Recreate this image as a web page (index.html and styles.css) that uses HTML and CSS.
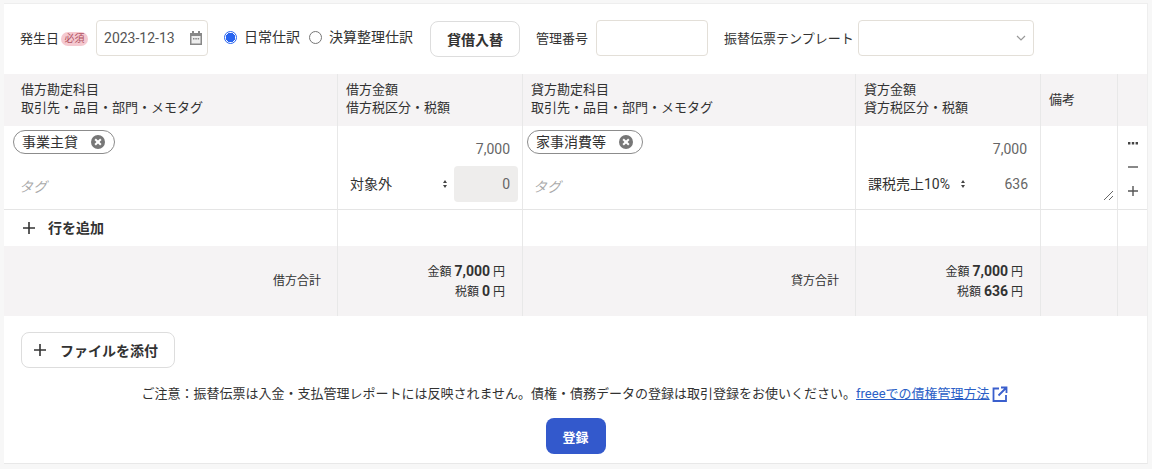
FILE: index.html
```html
<!DOCTYPE html>
<html lang="ja">

<head>
    <title>振替伝票</title>
    <link rel="stylesheet" href="styles.css">
</head>

<body>
    <div class="card">
        <!-- Toolbar -->
        <div class="toolbar">
            <span class="label">発生日</span>
            <span class="required">必須</span>
            <div class="field date-field">
                <span>2023-12-13</span>
                <svg class="calendar" width="12" height="14" viewBox="0 0 12 14">
                    <path fill="#888" d="M2 0h2v2h4V0h2v2h2v12H0V2h2z" />
                    <rect x="1.5" y="5" width="9" height="7.5" fill="#eee" />
                    <rect x="3" y="7" width="1.5" height="1.5" fill="#888" />
                    <rect x="5.3" y="7" width="1.5" height="1.5" fill="#888" />
                    <rect x="7.6" y="7" width="1.5" height="1.5" fill="#888" />
                </svg>
            </div>
            <span class="radio checked"></span>
            <span class="radio-label">日常仕訳</span>
            <span class="radio"></span>
            <span class="radio-label">決算整理仕訳</span>
            <button class="button swap">貸借入替</button>
            <span class="label number-label">管理番号</span>
            <div class="field number-field"></div>
            <span class="label template-label">振替伝票テンプレート</span>
            <div class="field template-field">
                <svg width="10" height="6" viewBox="0 0 10 6">
                    <path d="M1 1l4 4 4-4" fill="none" stroke="#999" stroke-width="1.2" />
                </svg>
            </div>
        </div>

        <!-- Journal table -->
        <div class="journal">
            <div class="cell head">借方勘定科目<br>取引先・品目・部門・メモタグ</div>
            <div class="cell head">借方金額<br>借方税区分・税額</div>
            <div class="cell head">貸方勘定科目<br>取引先・品目・部門・メモタグ</div>
            <div class="cell head">貸方金額<br>貸方税区分・税額</div>
            <div class="cell head">備考</div>
            <div class="cell head"></div>

            <div class="cell body account">
                <span class="chip">事業主貸<i class="chip-x"></i></span>
                <span class="tag">タグ</span>
            </div>
            <div class="cell body amount">
                <div class="amount-value">7,000</div>
                <div class="tax-row">
                    <span class="tax-name debit-tax">対象外</span>
                    <svg class="updown" width="6" height="10" viewBox="0 0 6 10">
                        <path fill="#444" d="M3 1l2 3H1zM3 9L1 6h4z" />
                    </svg>
                    <span class="tax-value disabled">0</span>
                </div>
            </div>
            <div class="cell body account">
                <span class="chip">家事消費等<i class="chip-x"></i></span>
                <span class="tag">タグ</span>
            </div>
            <div class="cell body amount">
                <div class="amount-value credit-value">7,000</div>
                <div class="tax-row">
                    <span class="tax-name credit-tax">課税売上10%</span>
                    <svg class="updown" width="6" height="10" viewBox="0 0 6 10">
                        <path fill="#444" d="M3 1l2 3H1zM3 9L1 6h4z" />
                    </svg>
                    <span class="tax-value">636</span>
                </div>
            </div>
            <div class="cell body memo">
                <svg class="resize" width="9" height="9" viewBox="0 0 9 9">
                    <path d="M0 9l9-9M5 9l4-4" stroke="#666" fill="none" />
                </svg>
            </div>
            <div class="cell body actions">
                <svg width="12" height="12" viewBox="0 0 12 12">
                    <path fill="#444" d="M1 5h2.4v2.4H1zM4.8 5h2.4v2.4H4.8zM8.6 5H11v2.4H8.6z" />
                </svg>
                <svg width="12" height="12" viewBox="0 0 12 12">
                    <path fill="#555" d="M1 5.300h10v1.400H1z" />
                </svg>
                <svg width="12" height="12" viewBox="0 0 12 12">
                    <path fill="#555" d="M1 5.300h4.300V1h1.400v4.300H11v1.400H6.700V11H5.300V6.700H1z" />
                </svg>
            </div>

            <div class="cell add-row">
                <svg width="14" height="14" viewBox="0 0 14 14">
                    <path fill="#333" d="M1 6.200h5.200V1h1.600v5.200H13v1.600H7.800V13H6.200V7.800H1z" />
                </svg>
                <span>行を追加</span>
            </div>
            <div class="cell add-row"></div>
            <div class="cell add-row"></div>
            <div class="cell add-row"></div>
            <div class="cell add-row"></div>
            <div class="cell add-row"></div>

            <div class="cell total total-label">借方合計</div>
            <div class="cell total total-sum">
                <div>金額 <b>7,000</b> 円</div>
                <div>税額 <b>0</b> 円</div>
            </div>
            <div class="cell total total-label">貸方合計</div>
            <div class="cell total total-sum">
                <div>金額 <b>7,000</b> 円</div>
                <div>税額 <b>636</b> 円</div>
            </div>
            <div class="cell total"></div>
            <div class="cell total"></div>
        </div>

        <!-- Footer -->
        <div class="footer">
            <button class="button attach">
                <svg width="14" height="14" viewBox="0 0 14 14">
                    <path fill="#333" d="M1 6.200h5.200V1h1.600v5.200H13v1.600H7.800V13H6.200V7.800H1z" />
                </svg>
                ファイルを添付
            </button>
            <p class="notice">ご注意：振替伝票は入金・支払管理レポートには反映されません。債権・債務データの登録は取引登録をお使いください。<a href="#">freeeでの債権管理方法</a><svg class="external" width="16" height="16" viewBox="0 0 16 16">
                    <path d="M7 2.500H1.500v12.500h12.500V9M9 1.500h5.500V7M14 2L6.500 9.500" fill="none" stroke="#3a5fcd" stroke-width="1.800" />
                </svg></p>
            <button class="submit">登録</button>
        </div>
    </div>
</body>

</html>
```

FILE: styles.css
```css
/* Journal entry form */
* {
    box-sizing: border-box;
}

body {
    margin: 0;
    height: 469px;
    overflow: hidden;
    padding: 3px 4px 0 4px;
    background-color: #f7f7f7;
    color: #323232;
    font-family: Roboto, "Noto Sans CJK JP", sans-serif;
    font-size: 14px;
    line-height: 18px;
}

.card {
    width: 1144px;
    height: 461px;
    background-color: #fff;
    border-top: 1px solid #eee;
    border-bottom: 1px solid #e8e8e8;
    border-right: 1px solid #eee;
}

.toolbar {
    display: flex;
    align-items: center;
    height: 70px;
    padding-left: 16px;
}

.label {
    font-size: 13px;
}

.required {
    width: 27px;
    height: 14px;
    margin: 0 8px 0 2px;
    border-radius: 7px;
    background-color: #f5c9d0;
    color: #b0505f;
    font-size: 10px;
    line-height: 14px;
    text-align: center;
}

.field {
    display: flex;
    align-items: center;
    height: 36px;
    border: 1px solid #e3dfd8;
    border-radius: 4px;
    background-color: #fff;
}

.date-field {
    width: 112px;
    margin-bottom: 2px;
    padding: 0 5px 0 7px;
    justify-content: space-between;
    color: #555;
}

.radio {
    width: 13px;
    height: 13px;
    margin: 0 0 4px 16px;
    border: 1px solid #767676;
    border-radius: 50%;
}

.radio.checked {
    border: 1px solid #2864f0;
    background: radial-gradient(circle, #2864f0 0 4.5px, #fff 5px);
}

.radio + .radio-label + .radio {
    margin-left: 9px;
}

.radio-label {
    margin: 0 0 4px 7px;
}

.button {
    border: 1px solid #ddd;
    border-radius: 8px;
    background-color: #fff;
    color: #323232;
    font-family: inherit;
    font-size: 14px;
    font-weight: 700;
}

.swap {
    width: 90px;
    height: 36px;
    margin-left: 17px;
}

.number-label {
    margin-left: 16px;
}

.number-field {
    width: 112px;
    margin: 0 0 2px 8px;
}

.template-label {
    margin-left: 16px;
}

.template-field {
    width: 176px;
    margin: 0 0 2px 4px;
    padding-right: 7px;
    justify-content: flex-end;
}

.journal {
    display: grid;
    grid-template-columns: 334px 185px 333px 185px 77px 29px;
    grid-template-rows: 52px 84px 36px 70px;
}

.cell {
    border-right: 1px solid #e8e8e8;
}

.cell:nth-child(6n) {
    border-right: none;
}

.head {
    padding: 7px 8px;
    background-color: #f5f3f4;
    font-size: 13px;
}

.head:nth-child(1) {
    padding-left: 17px;
}

.head:nth-child(5) {
    display: flex;
    align-items: center;
}

.body {
    border-bottom: 1px solid #e5e5e5;
}

.account {
    display: flex;
    flex-direction: column;
    align-items: flex-start;
    padding: 4px 0 0 9px;
}

.account:nth-child(9) {
    padding-left: 4px;
}

.chip {
    display: flex;
    align-items: center;
    height: 24px;
    padding: 0 9px 0 8px;
    border: 1px solid #8c8c8c;
    border-radius: 12px;
}

.chip-x {
    position: relative;
    width: 14px;
    height: 14px;
    margin-left: 13px;
    border-radius: 50%;
    background-color: #777;
}

/* the little white cross in the chip's close button */
.chip-x::before,
.chip-x::after {
    content: "";
    position: absolute;
    left: 3px;
    top: 6px;
    width: 8px;
    height: 2px;
    background-color: #fff;
    transform: rotate(45deg);
}

.chip-x::after {
    transform: rotate(-45deg);
}

.tag {
    margin: 24px 0 0 6px;
    color: #aaa;
    font-style: italic;
}

.amount {
    padding: 14px 4px 0 12px;
}

.amount-value {
    padding-right: 8px;
    color: #666;
    text-align: right;
}

.credit-value {
    padding-right: 9px;
}

.tax-row {
    display: flex;
    align-items: center;
    height: 36px;
    margin-top: 8px;
}

.tax-name {
    flex: 1;
}

.debit-tax {
    flex: 0 0 92px;
}

.credit-tax {
    flex: 0 0 92px;
}

.updown {
    margin-bottom: 1px;
}

.tax-value {
    flex: 1;
    height: 36px;
    margin-left: 6px;
    padding-right: 8px;
    border-radius: 4px;
    color: #666;
    line-height: 36px;
    text-align: right;
}

.disabled {
    background-color: #eeedec;
}

.memo {
    display: flex;
    align-items: flex-end;
    justify-content: flex-end;
    padding: 0 4px 9px 0;
}

.actions {
    display: flex;
    flex-direction: column;
    align-items: center;
    gap: 12px;
    padding-top: 11px;
}

.add-row {
    display: flex;
    align-items: center;
    gap: 12px;
    padding-left: 18px;
    font-weight: 700;
}

.total {
    background-color: #f5f3f4;
    font-size: 12px;
}

.total-label {
    display: flex;
    align-items: center;
    justify-content: flex-end;
    padding-right: 16px;
}

.total-sum {
    padding: 16px 17px 0 0;
    line-height: 19px;
    text-align: right;
}

.total-sum b {
    font-size: 14px;
}

.footer {
    display: flex;
    flex-direction: column;
    align-items: center;
}

.attach {
    display: flex;
    align-items: center;
    align-self: flex-start;
    gap: 13px;
    height: 36px;
    margin: 16px 0 0 17px;
    padding: 0 16px 0 11px;
}

.notice {
    display: flex;
    align-items: center;
    margin: 17px 0 0 0;
    padding-right: 2px;
    font-size: 13px;
}

.notice a {
    color: #2b5fc7;
}

.external {
    margin-left: 2px;
}

.submit {
    width: 60px;
    height: 36px;
    margin-top: 15px;
    border: none;
    border-radius: 8px;
    background-color: #3359cc;
    color: #fff;
    font-family: inherit;
    font-size: 13px;
    font-weight: 700;
}
```
